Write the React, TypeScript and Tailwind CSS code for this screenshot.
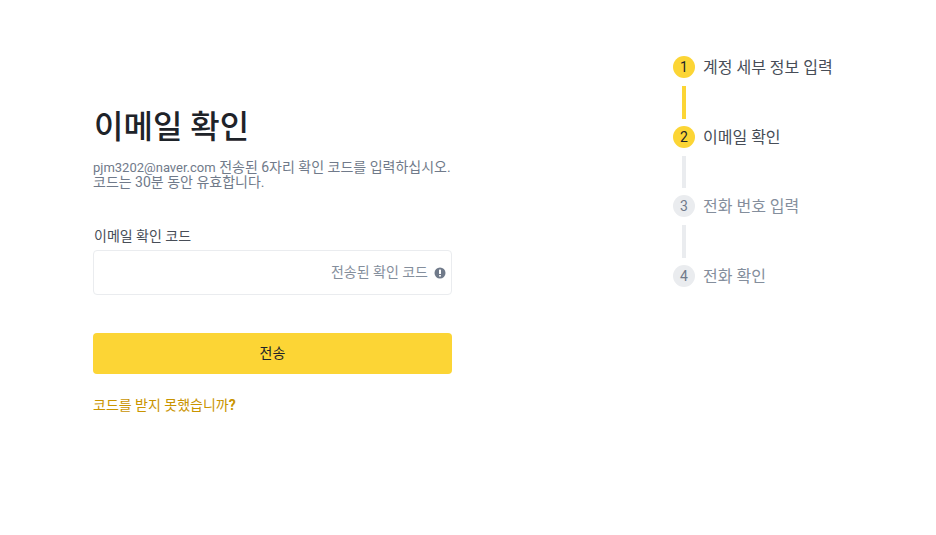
import React from "react";

const steps = [
  { n: 1, label: "계정 세부 정보 입력", active: true, bar: "h-[33px] bg-[#fcd535]" },
  { n: 2, label: "이메일 확인", active: true, bar: "h-[32px] bg-[#eaecef]" },
  { n: 3, label: "전화 번호 입력", active: false, bar: "h-[33px] bg-[#eaecef]" },
  { n: 4, label: "전화 확인", active: false, bar: "" },
];

const font = "font-['Roboto','Noto_Sans_CJK_KR',sans-serif]";

export default function App() {
  return (
    <div className={`flex h-[535px] w-[936px] overflow-hidden bg-white ${font}`}>
      <div className="ml-[93px] flex w-[359px] flex-col pt-[107px]">
        <h1 className="pl-px text-[32px] font-medium leading-[40px] text-[#1e2329]">이메일 확인</h1>
        <p className="mt-[13px] whitespace-nowrap text-[14px] leading-[15px] text-[#707a8a]">
          <span className="text-[13px]">pjm3202@naver.com</span> 전송된 6자리 확인 코드를 입력하십시오.
          <br />
          코드는 30분 동안 유효합니다.
        </p>
        <label className="mt-[36px] pl-px text-[14px] leading-[20px] text-[#474d57]">이메일 확인 코드</label>
        <div className="mt-[4px] flex h-[45px] items-center justify-end rounded border border-[#eaecef] pr-[5px]">
          <span className="text-[14px] text-[#848e9c]">전송된 확인 코드</span>
          <svg className="ml-[6px]" width="12" height="12" viewBox="0 0 12 12">
            <circle cx="6" cy="6" r="5.5" fill="#707a8a" />
            <rect x="5" y="2.5" width="2" height="4.5" rx="0.5" fill="#fff" />
            <rect x="5" y="8" width="2" height="1.6" rx="0.5" fill="#fff" />
          </svg>
        </div>
        <button className="mt-[38px] flex h-[41px] items-center justify-center rounded bg-[#fcd535] text-[14px] text-[#1e2329]">
          전송
        </button>
        <a className="mt-[21px] text-[14px] leading-[20px] text-[#c99400]">
          코드를 받지 못했습니까<span className="font-bold">?</span>
        </a>
      </div>
      <div className="ml-[221px] flex flex-col pt-[56px]">
        {steps.map((s) => (
          <div key={s.n} className="flex flex-col">
            <div className="flex items-center">
              <div
                className={`flex h-[22px] w-[22px] items-center justify-center rounded-full text-[14px] ${
                  s.active ? "bg-[#fcd535] text-[#1e2329]" : "bg-[#eaecef] text-[#707a8a]"
                }`}
              >
                {s.n}
              </div>
              <span
                className={`ml-[8px] mt-[2px] text-[16px] leading-[20px] ${
                  s.active ? "text-[#474d57]" : "text-[#848e9c]"
                }`}
              >
                {s.label}
              </span>
            </div>
            {s.bar && <div className={`my-[7.5px] ml-[9px] w-[4px] ${s.bar}`} />}
          </div>
        ))}
      </div>
    </div>
  );
}
